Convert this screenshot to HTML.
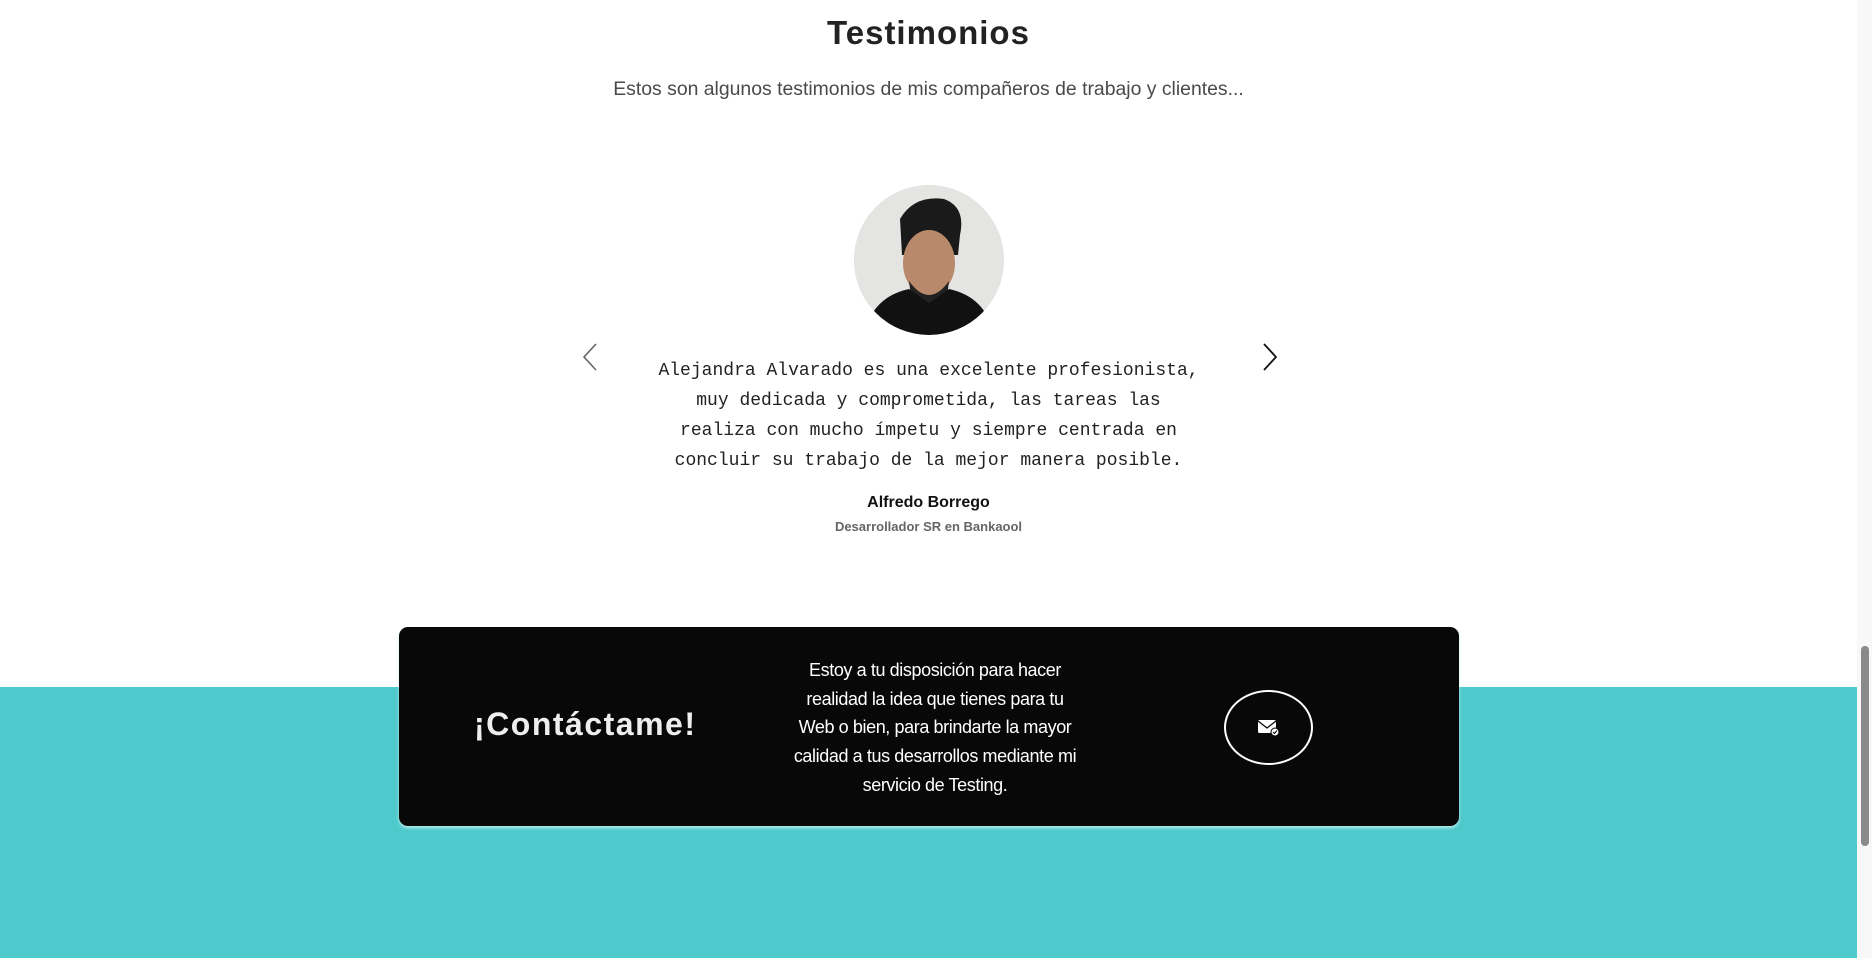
<!DOCTYPE html>
<html><head><meta charset="utf-8"><style>
html,body{margin:0;padding:0;width:1872px;height:958px;overflow:hidden;background:#fff;font-family:"Liberation Sans",sans-serif}
.main{position:absolute;left:0;top:0;width:1857px;height:958px;background:#fff}
.teal{position:absolute;left:0;top:687px;width:1857px;height:271px;background:#4ec9cc}
.sb{position:absolute;left:1857px;top:0;width:15px;height:958px;background:#f8f8f8}
.thumb{position:absolute;left:1861px;top:646px;width:8px;height:200px;background:#8a8a8a;border-radius:4px}
.c{position:absolute;left:0;width:1857px;text-align:center}
h1{margin:0;font-size:33px;font-weight:900;color:#222;letter-spacing:1px;top:14px}
.sub{top:78px;font-size:19.4px;color:#4a4a4a}
.av{position:absolute;left:854px;top:185px;width:150px;height:150px;border-radius:50%;background:#e6e6e4;overflow:hidden}
.q{top:356px;font-family:"Liberation Mono",monospace;font-size:18px;letter-spacing:0;line-height:30px;color:#222}
.nm{top:494px;font-size:16px;font-weight:bold;color:#111}
.rl{top:519px;font-size:13px;font-weight:bold;color:#666}
.card{position:absolute;left:399px;top:627px;width:1060px;height:199px;background:#080808;border-radius:9px;box-shadow:0 2px 3px rgba(200,240,240,.9)}
.ct{position:absolute;left:474px;top:706px;font-size:32px;font-weight:900;color:#eee;letter-spacing:1.5px}
.p{position:absolute;left:735px;top:656px;width:400px;text-align:center;color:#fff;font-size:18px;letter-spacing:-0.4px;line-height:28.7px}
.btn{position:absolute;left:1224px;top:690px;width:85px;height:71px;border:2px solid #fff;border-radius:50%}
</style></head><body>
<div class="main"></div>
<div class="teal"></div>
<div class="sb"></div><div class="thumb"></div>
<h1 class="c">Testimonios</h1>
<div class="c sub">Estos son algunos testimonios de mis compañeros de trabajo y clientes...</div>
<div class="av"><svg width="150" height="150">
<rect width="150" height="150" fill="#e4e4e2"/>
<path d="M46 34 Q60 10 90 14 Q112 22 106 50 L104 70 L48 70Z" fill="#1a1a1a"/>
<ellipse cx="75" cy="78" rx="26" ry="33" fill="#b8896a"/>
<path d="M55 96 Q75 124 95 96 L93 112 Q75 124 57 112Z" fill="#222"/>
<path d="M10 150 Q18 112 55 104 L75 118 L95 104 Q132 112 140 150Z" fill="#111"/>
</svg></div>
<svg style="position:absolute;left:580px;top:342px" width="20" height="30"><path d="M16 2 L4 15 L16 28" stroke="#666" stroke-width="1.6" fill="none"/></svg>
<svg style="position:absolute;left:1260px;top:342px" width="20" height="30"><path d="M4 2 L16 15 L4 28" stroke="#111" stroke-width="1.8" fill="none"/></svg>
<div class="c q">Alejandra Alvarado es una excelente profesionista,<br>muy dedicada y comprometida, las tareas las<br>realiza con mucho ímpetu y siempre centrada en<br>concluir su trabajo de la mejor manera posible.</div>
<div class="c nm">Alfredo Borrego</div>
<div class="c rl">Desarrollador SR en Bankaool</div>
<div class="card"></div>
<div class="ct">¡Contáctame!</div>
<div class="p">Estoy a tu disposición para hacer<br>realidad la idea que tienes para tu<br>Web o bien, para brindarte la mayor<br>calidad a tus desarrollos mediante mi<br>servicio de Testing.</div>
<div class="btn"></div>
<svg style="position:absolute;left:1257px;top:719px" width="24" height="18"><rect x="1" y="1" width="18" height="13" rx="1.5" fill="#fff"/><path d="M1 2 L10 9 L19 2" stroke="#000" stroke-width="1.2" fill="none"/><circle cx="18" cy="13" r="4" fill="#fff" stroke="#000" stroke-width="1"/><path d="M16 13 L17.5 14.5 L20 11.5" stroke="#000" stroke-width="1" fill="none"/></svg>
</body></html>
